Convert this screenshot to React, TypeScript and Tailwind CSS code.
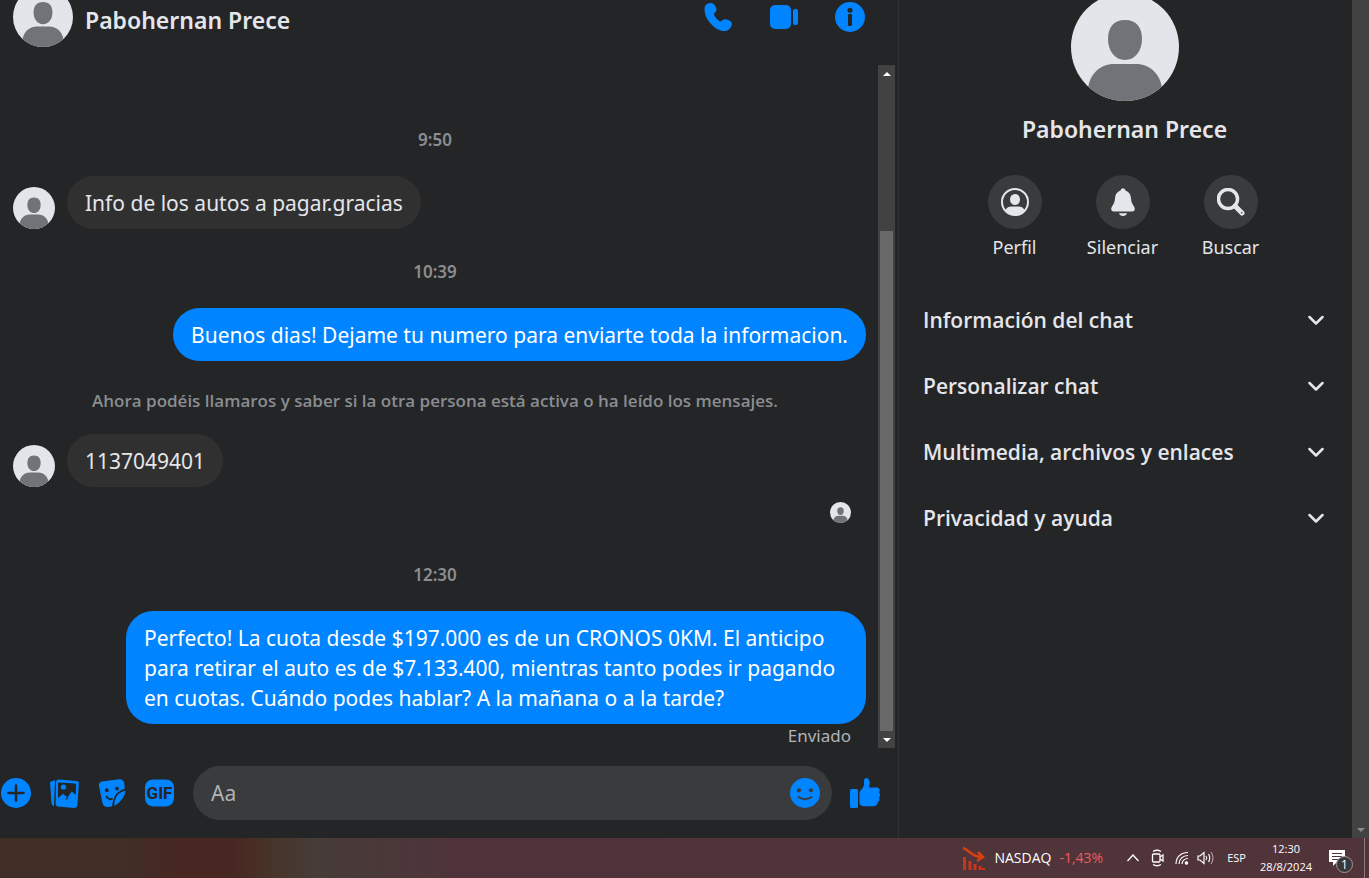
import { useId } from 'react';
import type { ReactNode } from 'react';

function Avatar({ className }: { className: string }) {
  const clip = useId();
  return (
    <svg viewBox="0 0 108 108" className={className} aria-hidden="true">
      <clipPath id={clip}>
        <circle cx="54" cy="54" r="54" />
      </clipPath>
      <g clipPath={`url(#${clip})`}>
        <rect width="108" height="108" fill="#e2e5ea" />
        <path d="M54 27C65 27 71 34 71 46C71 58 64 67 54 67C44 67 37 58 37 46C37 34 43 27 54 27Z" fill="#707378" />
        <path d="M17 95C19 81 29 71 43 71H65C79 71 89 81 91 95V108H17Z" fill="#707378" />
      </g>
    </svg>
  );
}

function PhoneIcon() {
  return (
    <svg viewBox="0 0 30 30" className="size-[30px]" fill="#0084ff">
      <path d="M2 4C4 1 8.500 0 11 2.500C12.500 4.200 13.500 6 13.500 8C13.300 10 10.800 11 10.800 12.600C12 15.500 14.500 18 17 19.500C18.700 19.700 20 17.300 22 17.300C24.500 17.300 27.500 18.700 28.600 20.500C30 23.500 26.500 28 23 29C12 30 -1 15 2 4Z" />
    </svg>
  );
}

function VideoIcon() {
  return (
    <svg viewBox="0 0 30 30" className="size-[30px]" fill="#0084ff">
      <rect x="1" y="3" width="21" height="24" rx="5" />
      <rect x="24" y="7" width="5" height="16" rx="2" />
    </svg>
  );
}

function InfoIcon() {
  return (
    <svg viewBox="0 0 30 30" className="size-[30px]">
      <circle cx="15" cy="15" r="15" fill="#0084ff" />
      <circle cx="15" cy="8.300" r="2.500" fill="#242526" />
      <rect x="13" y="12" width="4" height="12" rx="1" fill="#242526" />
    </svg>
  );
}

function PlusIcon() {
  return (
    <svg viewBox="0 0 30 30" className="size-[30px]">
      <circle cx="15" cy="15" r="15" fill="#0084ff" />
      <path d="M15 7.500V22.500M7.500 15H22.500" stroke="#242526" strokeWidth="2.500" strokeLinecap="round" />
    </svg>
  );
}

function GalleryIcon() {
  return (
    <svg viewBox="0 0 30 30" className="size-[30px]">
      <path d="M1 4L6 2L5 28Q3 28 2.500 25Z" fill="#0084ff" />
      <path d="M9.500 1.500L27.500 3Q30 3.200 29.800 6L28.500 27Q28 30 25 30L9 28.500Q6.500 28.200 6.600 25.500L7 4Q7.300 1.300 9.500 1.500Z" fill="#0084ff" />
      <path d="M10 4.500L26 5.600Q27.200 5.700 27.200 7L26.800 17L22.800 13.500L18.800 18.800L14.500 15.500L9 20V5.500Q9 4.500 10 4.500Z" fill="#242526" />
      <circle cx="14.500" cy="9" r="2.600" fill="#0084ff" />
      <path d="M14.500 15.500L18.800 18.800L17 21.500" fill="none" stroke="#242526" strokeWidth="1.200" />
    </svg>
  );
}

function StickerIcon() {
  return (
    <svg viewBox="0 0 30 30" className="size-[30px]">
      <path d="M5 3.500L22 1.200Q26.500 .8 27.200 5L27.700 10.800Q20.500 13 17.800 18Q15.800 22 15 28.500L11 29Q6.500 29.200 5.500 25L2 8Q1.500 4 5 3.500Z" fill="#0084ff" />
      <path d="M28.500 12.500Q27.500 22 17.200 28Q17.200 22 19.700 18Q22.500 14 28.500 12.500Z" fill="#0084ff" />
      <circle cx="9.800" cy="12.200" r="1.900" fill="#242526" />
      <circle cx="20" cy="10.600" r="1.900" fill="#242526" />
      <path d="M9.500 18.500Q11.500 22 15 21" fill="none" stroke="#242526" strokeWidth="1.800" strokeLinecap="round" />
    </svg>
  );
}

function GifIcon() {
  return (
    <svg viewBox="0 0 30 30" className="size-[30px]">
      <path d="M9 1.500H20C26 1.500 29 4.500 29 10V19C29 25 26 28.500 20 28.500H9C3 28.500 0 25 0 19V10C0 4.500 3 1.500 9 1.500Z" fill="#0084ff" />
      <text x="14.500" y="21" textAnchor="middle" fontSize="17" fontWeight="700" fontFamily="Roboto, sans-serif" fill="#242526">
        GIF
      </text>
    </svg>
  );
}

function SmileIcon() {
  return (
    <svg viewBox="0 0 30 30" className="size-[30px]">
      <circle cx="15" cy="15" r="15" fill="#0084ff" />
      <circle cx="9" cy="12.300" r="2.100" fill="#3a3b3c" />
      <circle cx="21" cy="12.300" r="2.100" fill="#3a3b3c" />
      <path d="M8.500 19Q15 23.500 21.500 19" fill="none" stroke="#3a3b3c" strokeWidth="2" strokeLinecap="round" />
    </svg>
  );
}

function LikeIcon() {
  return (
    <svg viewBox="0 0 30 30" className="size-[30px]" fill="#0084ff">
      <rect x="0" y="11" width="8" height="19" rx="1.500" />
      <path d="M9.500 14C11 11.500 13.500 10 14 7V3C14 -.5 17.500 -.8 19 2C20.500 5 19.500 7.500 19 9.500H27C29.500 9.800 30.500 12.500 29 14.500C30.500 16 30.500 18.500 29 19.500C30 21.500 29.300 23.500 27.700 24C28 26.500 26.500 28.200 24 28.200H14C11.500 28.200 9.500 27 9.500 25Z" />
    </svg>
  );
}

function ProfileIcon() {
  return (
    <svg viewBox="0 0 28 28" className="size-7" fill="#e4e6eb">
      <circle cx="14" cy="14" r="13" fill="none" stroke="#e4e6eb" strokeWidth="2" />
      <ellipse cx="14" cy="11.500" rx="5" ry="5.500" />
      <path d="M4.500 22C5.500 19.500 8 18.500 10.500 18.500H17.500C20 18.500 22.500 19.500 23.500 22C21 25.500 17.500 27 14 27S7 25.500 4.500 22Z" />
    </svg>
  );
}

function BellIcon() {
  return (
    <svg viewBox="0 0 28 28" className="size-7" fill="#e4e6eb">
      <path d="M14 .3C15.400 .3 16.300 1.300 16.500 2.600C20 3.800 21.900 6.500 22 10.500C22.200 14 23.500 16 25 18.500C26.700 21.500 25.500 23.500 22.500 23.500H5.500C2.500 23.500 1.300 21.500 3 18.500C4.500 16 5.800 14 6 10.500C6.100 6.500 8 3.800 11.500 2.600C11.700 1.300 12.600 .3 14 .3Z" />
      <path d="M10 25.300H18C17.500 27 16 28 14 28S10.500 27 10 25.300Z" />
    </svg>
  );
}

function SearchIcon() {
  return (
    <svg viewBox="0 0 28 28" className="size-7" fill="none" stroke="#e4e6eb">
      <circle cx="11" cy="11" r="9.500" strokeWidth="3.500" />
      <path d="M18 18L25 25" strokeWidth="5" strokeLinecap="round" />
      <circle cx="24.700" cy="24.700" r=".8" fill="#3a3b3c" stroke="none" />
    </svg>
  );
}

function Triangle({ down = false }: { down?: boolean }) {
  return (
    <span className="flex h-[17px] items-center justify-center">
      <svg viewBox="0 0 8 4" className="h-1 w-2" fill="currentColor">
        <path d={down ? 'M0 0H8L4 4Z' : 'M0 4H8L4 0Z'} />
      </svg>
    </span>
  );
}

function Time({ children }: { children: ReactNode }) {
  return (
    <time className="flex h-[79px] items-center justify-center pt-1.5 text-[17px] leading-6 font-semibold text-[#8a8d91]">
      {children}
    </time>
  );
}

function Incoming({ children }: { children: ReactNode }) {
  return (
    <div className="flex items-end gap-3 pl-[13px]">
      <Avatar className="size-[42px]" />
      <p className="rounded-[27px] bg-[#303030] px-[18px] pt-3 pb-[11px] text-[21px] leading-[30px] text-[#e4e6eb]">
        {children}
      </p>
    </div>
  );
}

function Outgoing({ children }: { children: ReactNode }) {
  return (
    <div className="flex justify-end pr-1">
      <p className="max-w-[740px] rounded-[27px] bg-[#0084ff] px-[18px] pt-3 pb-[11px] text-[21px] leading-[30px] text-white">
        {children}
      </p>
    </div>
  );
}

function Header() {
  return (
    <header className="flex h-[65px] items-start justify-between overflow-hidden border-b border-[#222324] pr-[33px] pl-[13px]">
      <div className="flex items-center gap-3">
        <Avatar className="-mt-[13px] size-[60px]" />
        <h1 className="pb-2 text-[23px] leading-8 font-semibold text-[#e4e6eb]">Pabohernan Prece</h1>
      </div>
      <div className="flex gap-9 pt-0.5">
        <button aria-label="Llamar"><PhoneIcon /></button>
        <button aria-label="Videollamada"><VideoIcon /></button>
        <button aria-label="Información"><InfoIcon /></button>
      </div>
    </header>
  );
}

function Messages() {
  return (
    <div className="flex flex-1 pr-[3px]">
      <div className="flex-1 pt-8 pr-2">
        <Time>9:50</Time>
        <Incoming>Info de los autos a pagar.gracias</Incoming>
        <Time>10:39</Time>
        <Outgoing>Buenos dias! Dejame tu numero para enviarte toda la informacion.</Outgoing>
        <p className="flex h-[73px] items-center justify-center pt-1.5 font-['Open_Sans','Noto_Sans',sans-serif] text-[17px] leading-6 font-semibold text-[#8a8d91]">
          Ahora podéis llamaros y saber si la otra persona está activa o ha leído los mensajes.
        </p>
        <Incoming>1137049401</Incoming>
        <div className="flex justify-end pt-[15px] pr-[19px] pb-[9px]">
          <Avatar className="size-[21px]" />
        </div>
        <Time>12:30</Time>
        <Outgoing>
          Perfecto! La cuota desde $197.000 es de un CRONOS 0KM. El anticipo para retirar el auto es de $7.133.400,
          mientras tanto podes ir pagando en cuotas. Cuándo podes hablar? A la mañana o a la tarde?
        </Outgoing>
        <p className="pr-[19px] text-right text-[17px] leading-6 text-[#b0b3b8]">Enviado</p>
      </div>
      <div className="flex w-[17px] flex-col bg-[#424242] px-0.5 text-white">
        <Triangle />
        <div className="flex flex-1 flex-col justify-end">
          <div className="h-[77%] bg-[#686868]" />
        </div>
        <Triangle down />
      </div>
    </div>
  );
}

function Composer() {
  return (
    <form className="flex items-center gap-[18px] py-[18px] pr-[18px] pl-px">
      <button type="button" aria-label="Más acciones"><PlusIcon /></button>
      <button type="button" aria-label="Adjuntar foto"><GalleryIcon /></button>
      <button type="button" aria-label="Elegir sticker"><StickerIcon /></button>
      <button type="button" aria-label="Elegir GIF"><GifIcon /></button>
      <div className="flex h-[54px] flex-1 items-center rounded-full bg-[#3a3b3c] pr-3 pl-[18px]">
        <input
          type="text"
          aria-label="Mensaje"
          placeholder="Aa"
          className="min-w-0 flex-1 bg-transparent text-[21px] leading-[30px] text-[#e4e6eb] outline-none placeholder:text-[#b0b3b8]"
        />
        <button type="button" aria-label="Elegir emoji"><SmileIcon /></button>
      </div>
      <button type="button" aria-label="Me gusta"><LikeIcon /></button>
    </form>
  );
}

const actions = [
  { label: 'Perfil', icon: <ProfileIcon /> },
  { label: 'Silenciar', icon: <BellIcon /> },
  { label: 'Buscar', icon: <SearchIcon /> },
];

const sections = ['Información del chat', 'Personalizar chat', 'Multimedia, archivos y enlaces', 'Privacidad y ayuda'];

function Details() {
  return (
    <aside className="flex w-[454px] shrink-0 flex-col items-center overflow-hidden border-l border-[#303132] pr-0.5">
      <Avatar className="-mt-[7px] size-[108px]" />
      <h2 className="mt-3 text-[23px] leading-8 font-semibold text-[#e4e6eb]">Pabohernan Prece</h2>
      <div className="mt-[30px] flex pr-1">
        {actions.map((action) => (
          <button key={action.label} className="flex w-[108px] flex-col items-center gap-1.5">
            <span className="flex size-[54px] items-center justify-center rounded-full bg-[#3a3b3c]">{action.icon}</span>
            <span className="text-[18px] leading-6 text-[#e4e6eb]">{action.label}</span>
          </button>
        ))}
      </div>
      <div className="mt-7 w-full pr-[26px] pl-6">
        {sections.map((section) => (
          <button
            key={section}
            className="flex h-[66px] w-full items-center justify-between font-['Open_Sans','Noto_Sans',sans-serif] text-[21px] leading-[30px] font-semibold text-[#e4e6eb]"
          >
            {section}
            <svg viewBox="0 0 16 10" className="h-2.5 w-4" fill="none" stroke="#e4e6eb" strokeWidth="2.500" strokeLinecap="round" strokeLinejoin="round">
              <path d="M1.500 2L8 8.500L14.500 2" />
            </svg>
          </button>
        ))}
      </div>
    </aside>
  );
}

function Taskbar() {
  return (
    <footer className="flex h-10 items-center justify-end bg-[linear-gradient(to_right,#402e27_0%,#402e27_9%,#482722_13%,#482722_17%,#463529_20%,#463c38_23%,#4e343a_33%,#50343a_100%)] font-['Open_Sans','Noto_Sans',sans-serif] text-white">
      <svg viewBox="0 0 24 24" className="size-6" fill="none" stroke="#d8400f" strokeWidth="2.500">
        <path d="M1 2C8 4 9 11 20 11M16 6L21 11L15 15" />
        <path d="M2.500 11V24M8 15V24M13 18V24M18 20V24M21.500 22V24" stroke="#c9351b" strokeWidth="3" />
      </svg>
      <span className="ml-2 text-[14px] leading-5">NASDAQ</span>
      <span className="ml-2 text-[14px] leading-5 text-[#ef5b60]">-1,43%</span>
      <svg viewBox="0 0 12 8" className="ml-6 h-2 w-3" fill="none" stroke="#fff" strokeWidth="1.300">
        <path d="M.5 7L6 1L11.500 7" />
      </svg>
      <svg viewBox="0 0 14 18" className="ml-3 h-[18px] w-3.5" fill="none" stroke="#fff" strokeWidth="1.300">
        <path d="M2 2.500Q6 0 10 2.500M2 15.500Q6 18 10 15.500" />
        <rect x="1.500" y="5" width="7.500" height="8" rx="1" />
        <path d="M9 8L12 6V12L9 10" />
      </svg>
      <svg viewBox="0 0 14 14" className="ml-2.5 size-3.5" fill="none" stroke="#fff" strokeWidth="1.200">
        <path d="M1 13C1 6 6 1.500 13 1.500M4 13C4 8 8 4.500 13 4.500M7 13C7 10 9.500 7.500 13 7.500" />
        <circle cx="11.500" cy="12" r="1.200" fill="#fff" />
      </svg>
      <svg viewBox="0 0 18 14" className="ml-2 h-3.5 w-[18px]" fill="none" stroke="#fff" strokeWidth="1.200">
        <path d="M1 5H3L7 1.500V12.500L3 9H1ZM9 5Q10.500 7 9 9M11.500 3Q14 7 11.500 11" />
        <path d="M14 1Q18 7 14 13" opacity=".5" />
      </svg>
      <span className="ml-3 text-[11px] leading-4">ESP</span>
      <span className="ml-3.5 text-center text-[11px] leading-[18px]">
        12:30
        <br />
        28/8/2024
      </span>
      <span className="relative ml-4 h-6 w-6">
        <svg viewBox="0 0 24 24" className="size-6">
          <path d="M1 4H17V16H9L5 20V16H1Z" fill="#fff" />
          <path d="M4 7.500H14M4 10.500H14M4 13.500H10" stroke="#50343a" strokeWidth="1.200" />
        </svg>
        <span className="absolute top-2.5 left-2 flex size-[17px] items-center justify-center rounded-full border border-[#9a9a9a] bg-[#3b3637] text-[12px] leading-4">
          1
        </span>
      </span>
      <span className="ml-3 h-10 w-[5px] border-l border-[#8d777b]" />
    </footer>
  );
}

export default function App() {
  return (
    <div className="flex min-h-screen flex-col bg-[#242526] font-['Noto_Sans','Open_Sans',sans-serif]">
      <div className="flex flex-1">
        <main className="flex min-w-0 flex-1 flex-col">
          <Header />
          <Messages />
          <Composer />
        </main>
        <Details />
        <div className="flex w-[17px] shrink-0 flex-col justify-end bg-[#424242] text-[#8a8a8a]">
          <Triangle down />
        </div>
      </div>
      <Taskbar />
    </div>
  );
}
